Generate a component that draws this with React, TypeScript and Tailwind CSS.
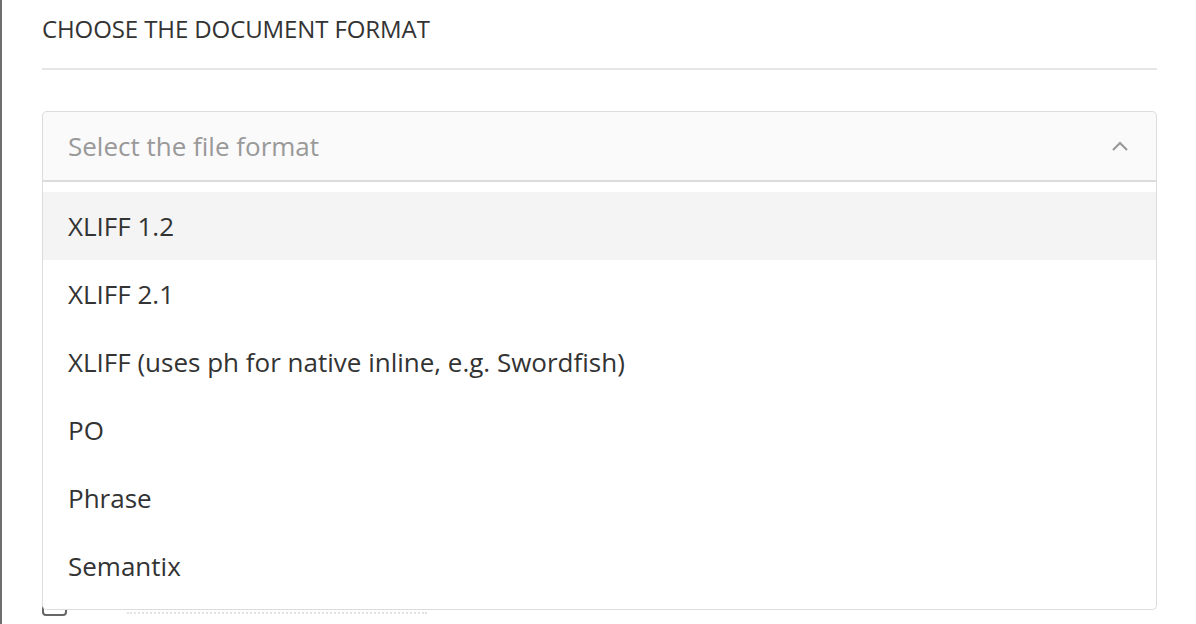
import { useState } from "react";

const formats = [
  "XLIFF 1.2",
  "XLIFF 2.1",
  "XLIFF (uses ph for native inline, e.g. Swordfish)",
  "PO",
  "Phrase",
  "Semantix",
];

const ChevronUp = () => (
  <svg width="18" height="12" viewBox="0 0 18 12" fill="none">
    <path d="M2 10 L9 3 L16 10" stroke="#9a9a9a" strokeWidth="2.2" />
  </svg>
);

const App = () => {
  const [hovered, setHovered] = useState(0);

  return (
    <div className="h-[624px] overflow-hidden border-l-2 border-[#6e6e6e] bg-white font-['Open_Sans',sans-serif] text-[#333]">
      <div className="pl-[40px] pr-[39px]">
        {/* Heading */}
        <h2 className="pt-[13px] pb-[23px] text-[24px] leading-[32px] tracking-[-0.1px]">
          CHOOSE THE DOCUMENT FORMAT
        </h2>
        <div className="h-[2px] bg-[#e6e6e6]" />

        {/* Select */}
        <div className="relative mt-[41px]">
          <div className="flex h-[71px] items-center justify-between rounded-t-[5px] border border-b-2 border-[#dcdcdc] bg-[#fafafa] pl-[25px] pr-[27px]">
            <span className="text-[26px] text-[#999]">Select the file format</span>
            <ChevronUp />
          </div>

          {/* Row hidden behind the open list */}
          <div className="mt-[410px] flex items-end">
            <div className="h-[24px] w-[25px] rounded-[4px] border-2 border-[#666]" />
            <div className="mb-[2px] ml-[60px] w-[300px] border-t-2 border-dotted border-[#e2e2e2]" />
          </div>

          {/* Open list */}
          <ul className="absolute left-0 right-0 top-[71px] rounded-b-[5px] border border-t-0 border-[#dcdcdc] bg-white pt-[10px] pb-[9px]">
            {formats.map((f, i) => (
              <li
                key={f}
                onMouseEnter={() => setHovered(i)}
                className={`flex h-[68px] items-center pl-[25px] text-[26px] ${
                  hovered === i ? "bg-[#f4f4f4]" : "bg-white"
                }`}
              >
                {f}
              </li>
            ))}
          </ul>
        </div>
      </div>
    </div>
  );
};

export default App;
